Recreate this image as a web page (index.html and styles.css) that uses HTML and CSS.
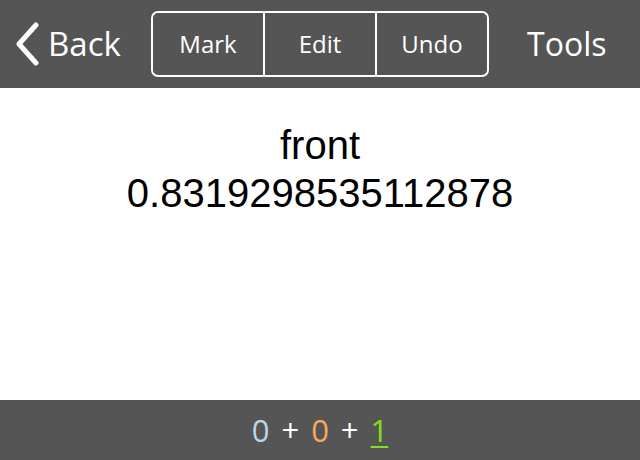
FILE: index.html
```html
<!DOCTYPE html>
<html>
<head>
<meta charset="utf-8">
<link rel="stylesheet" href="styles.css">
</head>
<body>
<div class="app">
  <header class="topbar">
    <div class="back">
      <svg class="chev" width="28" height="44" viewBox="0 0 28 44"><path d="M24 3 L7 22 L24 41" fill="none" stroke="#fff" stroke-width="5" stroke-linecap="round" stroke-linejoin="round"/></svg>
      <span class="back-label">Back</span>
    </div>
    <div class="seg">
      <div class="seg-item">Mark</div>
      <div class="seg-item">Edit</div>
      <div class="seg-item">Undo</div>
    </div>
    <div class="tools">Tools</div>
  </header>
  <main class="content">
    <div class="line">front</div>
    <div class="line">0.8319298535112878</div>
  </main>
  <footer class="bottombar">
    <span class="c-blue">0</span><span class="plus">+</span><span class="c-orange">0</span><span class="plus">+</span><span class="c-green">1</span>
  </footer>
</div>
</body>
</html>
```
FILE: styles.css
```css
html, body { margin: 0; padding: 0; }
body { width: 640px; height: 460px; overflow: hidden; background: #fff; font-family: "Liberation Sans", Arial, sans-serif; }
.app { display: flex; flex-direction: column; height: 460px; }
.topbar {
  height: 88px; background: #555555; color: #fff;
  display: flex; align-items: center; box-sizing: border-box; padding: 0 0 0 12px;
}
.back { display: flex; align-items: center; width: 139px; }
.chev { display: block; }
.back-label { font-family: "Open Sans", "Liberation Sans", sans-serif; font-size: 33px; margin-left: 8px; margin-top: -2px; }
.seg {
  display: flex; width: 338px; height: 66px; box-sizing: border-box;
  border: 2px solid #fff; border-radius: 7px;
}
.seg-item {
  flex: 1; display: flex; align-items: center; justify-content: center;
  font-family: "Open Sans", "Liberation Sans", sans-serif; font-size: 24px; margin-top: -1px;
}
.seg-item + .seg-item { border-left: 2px solid #fff; }
.tools { font-family: "Open Sans", "Liberation Sans", sans-serif; font-size: 32px; margin-left: 38px; margin-top: -2px; }
.content { flex: 1; display: flex; flex-direction: column; align-items: center; padding-top: 33px; }
.line { font-size: 40px; line-height: 48px; color: #000; }
.bottombar {
  height: 60px; background: #555555; display: flex; align-items: center; justify-content: center;
  font-family: "Open Sans", "Liberation Sans", sans-serif; font-size: 31px; color: #fff;
}
.plus { margin: 0 12px; }
.c-blue { color: #b8d6e8; }
.c-orange { color: #f7a95c; }
.c-green { color: #7ee01e; text-decoration: underline; text-decoration-thickness: 2px; text-underline-offset: 4px; }
```
